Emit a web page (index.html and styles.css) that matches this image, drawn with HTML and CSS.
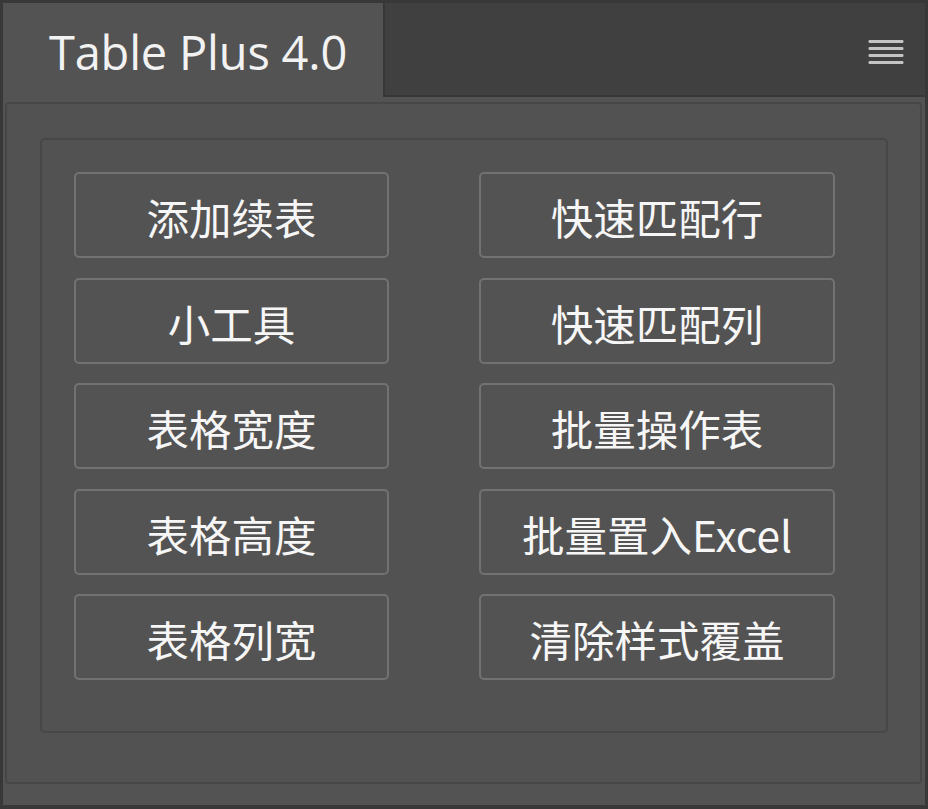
FILE: index.html
```html
<!DOCTYPE html>
<html lang="zh">
<head>
<meta charset="utf-8">
<title>Table Plus 4.0</title>
<link rel="stylesheet" href="styles.css">
</head>
<body>
<div class="window">
  <div class="frame">
    <div class="tabbar">
      <div class="tab"><span class="title">Table Plus 4.0</span></div>
      <div class="tabrest">
        <svg class="menu" width="36" height="26" viewBox="0 0 36 26" aria-hidden="true">
          <rect x="0.5" y="0" width="35" height="3" rx="1.2" fill="#c4c4c4"/>
          <rect x="0.5" y="7" width="35" height="3" rx="1.2" fill="#c4c4c4"/>
          <rect x="0.5" y="14" width="35" height="3" rx="1.2" fill="#c4c4c4"/>
          <rect x="0.5" y="21" width="35" height="3" rx="1.2" fill="#c4c4c4"/>
        </svg>
      </div>
    </div>
    <div class="body">
      <div class="panel">
        <div class="group">
          <div class="grid">
            <button class="btn">添加续表</button>
            <button class="btn">快速匹配行</button>
            <button class="btn">小工具</button>
            <button class="btn">快速匹配列</button>
            <button class="btn">表格宽度</button>
            <button class="btn">批量操作表</button>
            <button class="btn">表格高度</button>
            <button class="btn">批量置入Excel</button>
            <button class="btn">表格列宽</button>
            <button class="btn">清除样式覆盖</button>
          </div>
        </div>
      </div>
    </div>
  </div>
</div>
</body>
</html>
```

FILE: styles.css
```css
html, body {
  margin: 0;
  padding: 0;
  background: #383838;
}
.window {
  width: 928px;
  height: 809px;
  box-sizing: border-box;
  padding: 3px 3px 4px 3px;
  background: #383838;
}
.frame {
  height: 100%;
  display: flex;
  flex-direction: column;
  background: #535353;
}
.tabbar {
  height: 94px;
  display: flex;
  flex: none;
}
.tab {
  width: 380px;
  background: #535353;
  display: flex;
  align-items: center;
  padding-left: 46px;
  box-sizing: border-box;
}
.title {
  font-family: "Open Sans", "Noto Sans", sans-serif;
  font-size: 47px;
  color: #f2f2f2;
  letter-spacing: -0.2px;
  margin-top: 3px;
}
.tabrest {
  flex: 1;
  background: #404040;
  border-left: 2px solid #373737;
  border-bottom: 2px solid #373737;
  display: flex;
  justify-content: flex-end;
  align-items: flex-start;
  padding: 37px 21px 0 0;
}
.menu {
  display: block;
}
.body {
  flex: 1;
  padding: 5px 3px 21px 2px;
  display: flex;
  flex-direction: column;
}
.panel {
  flex: 1;
  border: 2px solid #474747;
  border-radius: 4px;
  background: #525252;
  padding: 34px 32px 49px 33px;
  display: flex;
  flex-direction: column;
}
.group {
  flex: 1;
  border: 2px solid #474747;
  border-radius: 5px;
  padding: 32px 51px 0 32px;
}
.grid {
  display: grid;
  grid-template-columns: 315px 356px;
  column-gap: 90px;
  grid-auto-rows: 86px;
  row-gap: 19.5px;
}
.btn {
  box-sizing: border-box;
  border: 2px solid #727272;
  border-radius: 5px;
  background: #535353;
  color: #f6f6f6;
  font-family: "Noto Sans CJK SC", "Noto Sans", sans-serif;
  font-size: 42.5px;
  line-height: 1;
  padding: 5px 0 0 0;
  margin: 0;
  display: flex;
  align-items: center;
  justify-content: center;
}
```
